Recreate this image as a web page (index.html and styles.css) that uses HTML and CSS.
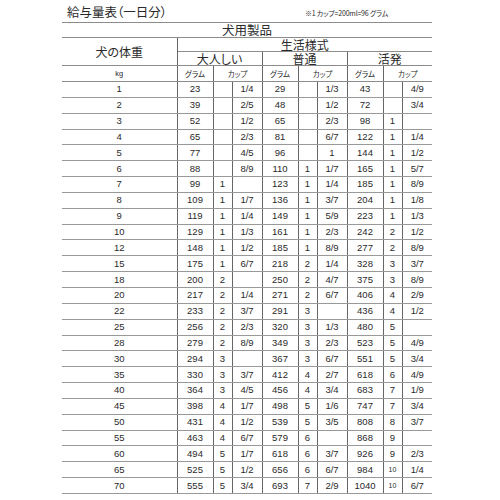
FILE: index.html
```html
<!DOCTYPE html>
<html lang="ja">
<head>
<meta charset="utf-8">
<title>給与量表</title>
<link rel="stylesheet" href="styles.css">
</head>
<body>
<div class="page">
  <div class="head">
    <div class="title">給与量表（一日分）</div>
    <div class="note">※1 カップ=200ml=96 グラム</div>
  </div>
  <table class="feed">
    <colgroup>
      <col class="c-kg">
      <col class="c-g"><col class="c-w"><col class="c-f">
      <col class="c-g"><col class="c-w"><col class="c-f">
      <col class="c-g"><col class="c-w"><col class="c-f">
    </colgroup>
    <tr class="h-a"><td colspan="10" class="jp big">犬用製品</td></tr>
    <tr class="h-b"><td rowspan="2" class="jp mid weight">犬の体重</td><td colspan="9" class="jp style">生活様式</td></tr>
    <tr class="h-c"><td colspan="3" class="jp grp">大人しい</td><td colspan="3" class="jp grp">普通</td><td colspan="3" class="jp grp">活発</td></tr>
    <tr class="h-d"><td class="unit">kg</td><td class="jp small">グラム</td><td colspan="2" class="jp small">カップ</td><td class="jp small">グラム</td><td colspan="2" class="jp small">カップ</td><td class="jp small">グラム</td><td colspan="2" class="jp small">カップ</td></tr>
    <tr class="row"><td>1</td><td>23</td><td></td><td>1/4</td><td>29</td><td></td><td>1/3</td><td>43</td><td></td><td>4/9</td></tr>
    <tr class="row"><td>2</td><td>39</td><td></td><td>2/5</td><td>48</td><td></td><td>1/2</td><td>72</td><td></td><td>3/4</td></tr>
    <tr class="row"><td>3</td><td>52</td><td></td><td>1/2</td><td>65</td><td></td><td>2/3</td><td>98</td><td>1</td><td></td></tr>
    <tr class="row"><td>4</td><td>65</td><td></td><td>2/3</td><td>81</td><td></td><td>6/7</td><td>122</td><td>1</td><td>1/4</td></tr>
    <tr class="row"><td>5</td><td>77</td><td></td><td>4/5</td><td>96</td><td></td><td>1</td><td>144</td><td>1</td><td>1/2</td></tr>
    <tr class="row"><td>6</td><td>88</td><td></td><td>8/9</td><td>110</td><td>1</td><td>1/7</td><td>165</td><td>1</td><td>5/7</td></tr>
    <tr class="row"><td>7</td><td>99</td><td>1</td><td></td><td>123</td><td>1</td><td>1/4</td><td>185</td><td>1</td><td>8/9</td></tr>
    <tr class="row"><td>8</td><td>109</td><td>1</td><td>1/7</td><td>136</td><td>1</td><td>3/7</td><td>204</td><td>1</td><td>1/8</td></tr>
    <tr class="row"><td>9</td><td>119</td><td>1</td><td>1/4</td><td>149</td><td>1</td><td>5/9</td><td>223</td><td>1</td><td>1/3</td></tr>
    <tr class="row"><td>10</td><td>129</td><td>1</td><td>1/3</td><td>161</td><td>1</td><td>2/3</td><td>242</td><td>2</td><td>1/2</td></tr>
    <tr class="row"><td>12</td><td>148</td><td>1</td><td>1/2</td><td>185</td><td>1</td><td>8/9</td><td>277</td><td>2</td><td>8/9</td></tr>
    <tr class="row"><td>15</td><td>175</td><td>1</td><td>6/7</td><td>218</td><td>2</td><td>1/4</td><td>328</td><td>3</td><td>3/7</td></tr>
    <tr class="row"><td>18</td><td>200</td><td>2</td><td></td><td>250</td><td>2</td><td>4/7</td><td>375</td><td>3</td><td>8/9</td></tr>
    <tr class="row"><td>20</td><td>217</td><td>2</td><td>1/4</td><td>271</td><td>2</td><td>6/7</td><td>406</td><td>4</td><td>2/9</td></tr>
    <tr class="row"><td>22</td><td>233</td><td>2</td><td>3/7</td><td>291</td><td>3</td><td></td><td>436</td><td>4</td><td>1/2</td></tr>
    <tr class="row"><td>25</td><td>256</td><td>2</td><td>2/3</td><td>320</td><td>3</td><td>1/3</td><td>480</td><td>5</td><td></td></tr>
    <tr class="row"><td>28</td><td>279</td><td>2</td><td>8/9</td><td>349</td><td>3</td><td>2/3</td><td>523</td><td>5</td><td>4/9</td></tr>
    <tr class="row"><td>30</td><td>294</td><td>3</td><td></td><td>367</td><td>3</td><td>6/7</td><td>551</td><td>5</td><td>3/4</td></tr>
    <tr class="row"><td>35</td><td>330</td><td>3</td><td>3/7</td><td>412</td><td>4</td><td>2/7</td><td>618</td><td>6</td><td>4/9</td></tr>
    <tr class="row"><td>40</td><td>364</td><td>3</td><td>4/5</td><td>456</td><td>4</td><td>3/4</td><td>683</td><td>7</td><td>1/9</td></tr>
    <tr class="row"><td>45</td><td>398</td><td>4</td><td>1/7</td><td>498</td><td>5</td><td>1/6</td><td>747</td><td>7</td><td>3/4</td></tr>
    <tr class="row"><td>50</td><td>431</td><td>4</td><td>1/2</td><td>539</td><td>5</td><td>3/5</td><td>808</td><td>8</td><td>3/7</td></tr>
    <tr class="row"><td>55</td><td>463</td><td>4</td><td>6/7</td><td>579</td><td>6</td><td></td><td>868</td><td>9</td><td></td></tr>
    <tr class="row"><td>60</td><td>494</td><td>5</td><td>1/7</td><td>618</td><td>6</td><td>3/7</td><td>926</td><td>9</td><td>2/3</td></tr>
    <tr class="row"><td>65</td><td>525</td><td>5</td><td>1/2</td><td>656</td><td>6</td><td>6/7</td><td>984</td><td class="tiny">10</td><td>1/4</td></tr>
    <tr class="row"><td>70</td><td>555</td><td>5</td><td>3/4</td><td>693</td><td>7</td><td>2/9</td><td>1040</td><td class="tiny">10</td><td>6/7</td></tr>
  </table>
</div>
</body>
</html>
```

FILE: styles.css
```css
html, body {
  margin: 0;
  padding: 0;
  background: #ffffff;
}

body {
  font-family: "Liberation Sans", "Noto Sans CJK JP", sans-serif;
  color: #2a2a2a;
}

.page {
  padding-left: 62px;
}

.head {
  height: 22px;
  width: 321px;
  padding-left: 5px;
  display: flex;
  align-items: center;
  justify-content: space-between;
}

.title {
  font-family: "Noto Sans CJK JP", sans-serif;
  font-feature-settings: "palt";
  font-size: 12.5px;
  line-height: 14px;
  padding-top: 1px;
}

.note {
  font-family: "Noto Sans CJK JP", sans-serif;
  font-feature-settings: "palt";
  font-size: 7px;
  letter-spacing: -0.2px;
  padding-top: 3px;
}

.feed {
  border-collapse: collapse;
  table-layout: fixed;
  width: 370px;
}

.c-kg { width: 115px; }
.c-g { width: 36px; }
.c-w { width: 19px; }
.c-f { width: 30px; }

.feed td {
  padding: 0;
  text-align: center;
  vertical-align: middle;
  white-space: nowrap;
}

.jp {
  font-family: "Noto Sans CJK JP", sans-serif;
  font-feature-settings: "palt";
}

.big {
  font-size: 12.5px;
  line-height: 12px;
}

.style {
  font-size: 12px;
  line-height: 11px;
  vertical-align: top;
  padding-top: 1px;
}

.mid {
  font-size: 12px;
  line-height: 12px;
}

.grp {
  font-size: 12px;
  line-height: 11px;
  vertical-align: bottom;
  padding-bottom: 1px;
}

.small {
  font-size: 7.5px;
  line-height: 10px;
}

.unit {
  font-size: 7.5px;
  line-height: 10px;
}

.h-a td {
  border-top: 1px solid #8c8c8c;
  border-bottom: 1px solid #8c8c8c;
}

.h-a { height: 15px; }
.h-b { height: 14px; }
.h-c { height: 14px; }
.h-d { height: 16px; }

.weight {
  border-right: 1px solid #666;
  border-bottom: 1px solid #8c8c8c;
}

.h-b td + td {
  border-bottom: 1px solid #8c8c8c;
}

.h-c td {
  border-bottom: 1px solid #8c8c8c;
}

.h-c td:not(:last-child) {
  border-right: 1px solid #666;
}

.h-d td {
  border-bottom: 1px solid #8c8c8c;
}

.h-d td:not(:last-child) {
  border-right: 1px solid #666;
}

.row {
  height: 15.85px;
}

.row td {
  font-size: 9.5px;
  line-height: 10px;
  border-bottom: 1px solid #999;
  overflow: hidden;
}

.row td:not(:last-child) {
  border-right: 1px solid #666;
}

.row td.tiny {
  font-size: 7px;
}
```
